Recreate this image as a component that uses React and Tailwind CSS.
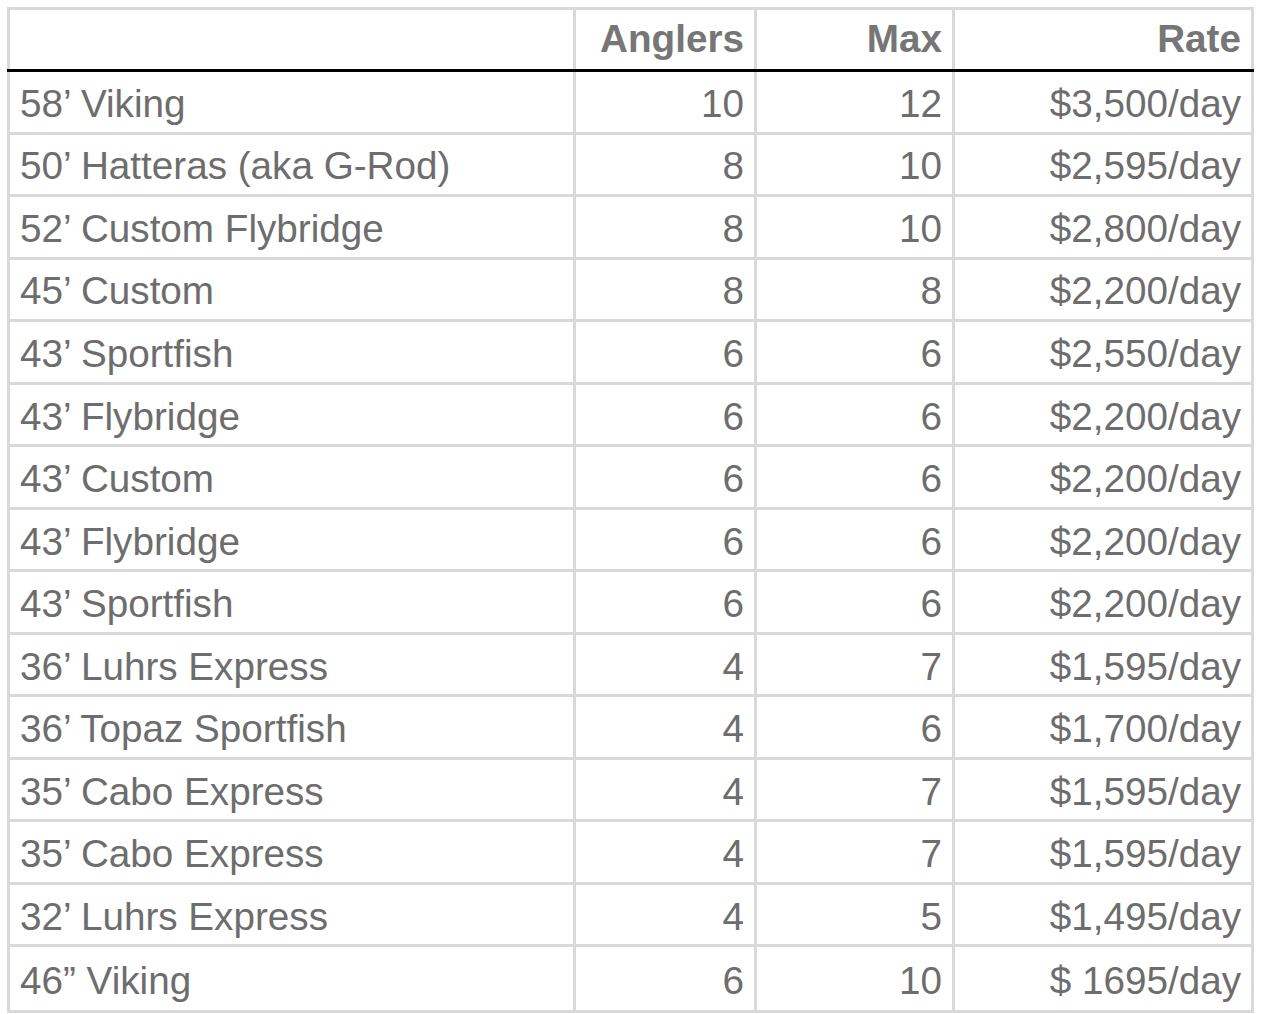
const rows = [
  ["58’ Viking", "10", "12", "$3,500/day"],
  ["50’ Hatteras (aka G-Rod)", "8", "10", "$2,595/day"],
  ["52’ Custom Flybridge", "8", "10", "$2,800/day"],
  ["45’ Custom", "8", "8", "$2,200/day"],
  ["43’ Sportfish", "6", "6", "$2,550/day"],
  ["43’ Flybridge", "6", "6", "$2,200/day"],
  ["43’ Custom", "6", "6", "$2,200/day"],
  ["43’ Flybridge", "6", "6", "$2,200/day"],
  ["43’ Sportfish", "6", "6", "$2,200/day"],
  ["36’ Luhrs Express", "4", "7", "$1,595/day"],
  ["36’ Topaz Sportfish", "4", "6", "$1,700/day"],
  ["35’ Cabo Express", "4", "7", "$1,595/day"],
  ["35’ Cabo Express", "4", "7", "$1,595/day"],
  ["32’ Luhrs Express", "4", "5", "$1,495/day"],
  ["46” Viking", "6", "10", "$ 1695/day"],
];

const cols = "grid grid-cols-[563px_3px_178px_3px_195px_3px_296px]";

function Row({ cells, last }) {
  return (
    <div className={`${cols} h-[62.53px] ${last ? "" : "border-b-[3px] border-[#d9d9d9]"} box-border`}>
      <div className="flex items-center pl-[10px] pt-[5px]">{cells[0]}</div>
      <div className="bg-[#d9d9d9]" />
      <div className="flex items-center justify-end pr-[10px] pt-[5px]">{cells[1]}</div>
      <div className="bg-[#d9d9d9]" />
      <div className="flex items-center justify-end pr-[10px] pt-[5px]">{cells[2]}</div>
      <div className="bg-[#d9d9d9]" />
      <div className="flex items-center justify-end pr-[10px] pt-[5px]">{cells[3]}</div>
    </div>
  );
}

export default function App() {
  return (
    <div className="w-[1264px] h-[1014px] bg-white pt-[7px] pl-[7px] font-['Liberation_Sans',Arial,sans-serif] text-[38.67px] text-[#6d6d6d] leading-none">
      <div className="w-[1247px] border-[3px] border-[#d9d9d9] box-border">
        <div className={`${cols} h-[59px] font-bold text-[#767676]`}>
          <div />
          <div className="bg-[#d9d9d9]" />
          <div className="flex items-center justify-end pr-[10px]">Anglers</div>
          <div className="bg-[#d9d9d9]" />
          <div className="flex items-center justify-end pr-[10px]">Max</div>
          <div className="bg-[#d9d9d9]" />
          <div className="flex items-center justify-end pr-[10px]">Rate</div>
        </div>
        <div className="h-[3px] bg-black -mx-[3px]" />
        {rows.map((r, i) => (
          <Row key={i} cells={r} last={i === rows.length - 1} />
        ))}
      </div>
    </div>
  );
}
